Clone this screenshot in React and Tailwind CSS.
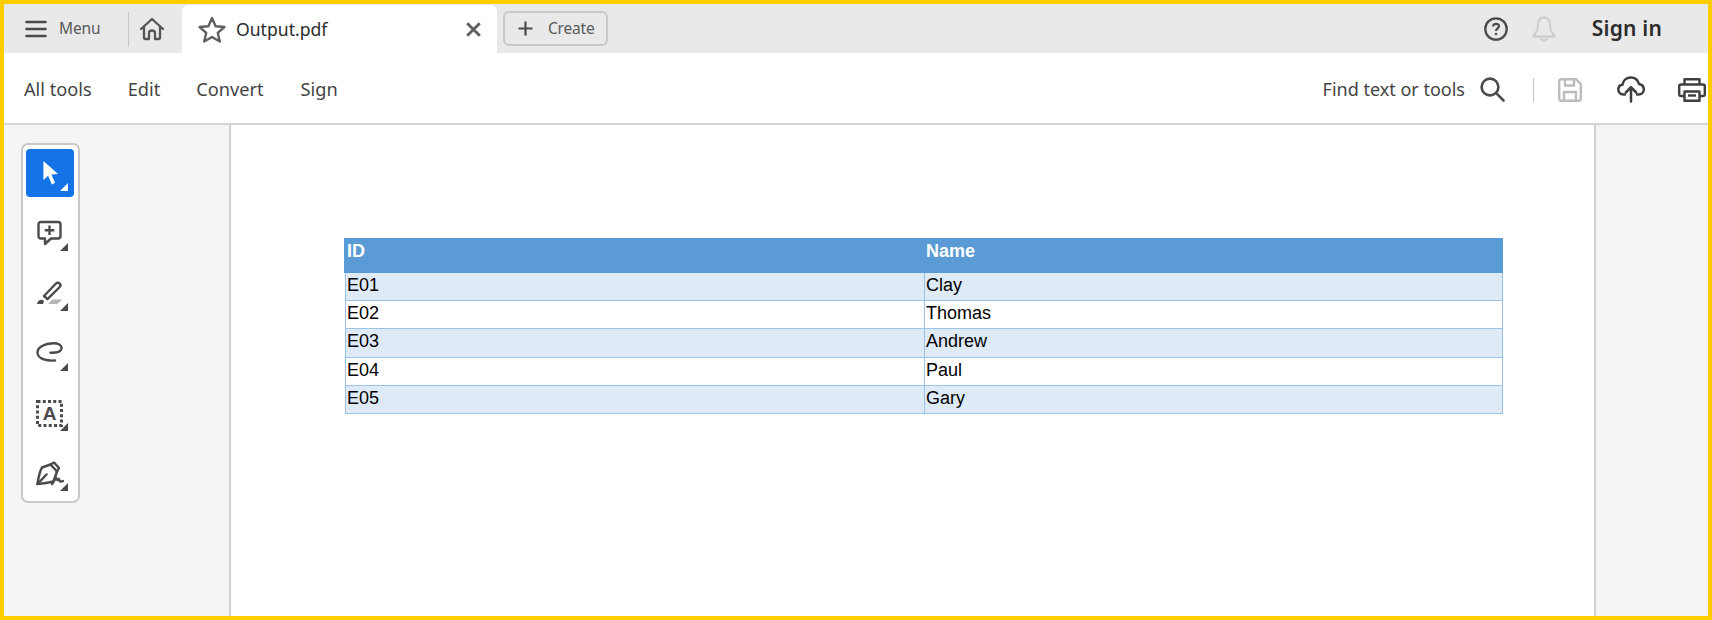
import React from "react";

const uiFont = "font-['Noto_Sans',sans-serif]";

const Corner = ({ color = "#4b4b4b" }) => (
  <svg className="absolute right-[6px] bottom-[6px]" width="8" height="8" viewBox="0 0 8 8">
    <path d="M8 0V8H0Z" fill={color} />
  </svg>
);

const ToolBtn = ({ active, children }) => (
  <div className={`relative flex h-12 w-12 items-center justify-center rounded-[4px] ${active ? "bg-[#1473e6]" : ""}`}>
    {children}
    <Corner color={active ? "#ffffff" : "#4b4b4b"} />
  </div>
);

const rows = [
  { id: "E01", name: "Clay", h: "h-[27px]" },
  { id: "E02", name: "Thomas", h: "h-[28px]" },
  { id: "E03", name: "Andrew", h: "h-[29px]" },
  { id: "E04", name: "Paul", h: "h-[28px]" },
  { id: "E05", name: "Gary", h: "h-[28px]" },
];

export default function App() {
  return (
    <div className={`flex h-[620px] w-[1712px] flex-col overflow-hidden border-4 border-[#ffcc00] bg-white ${uiFont}`}>
      {/* tab bar */}
      <div className="flex h-[49px] shrink-0 items-end bg-[#e9e9e9]">
        <div className="flex h-[49px] w-[178px] items-center">
          <svg className="ml-[21px]" width="22" height="18" viewBox="0 0 22 18" fill="none" stroke="#4b4b4b" strokeWidth="2.6" strokeLinecap="round">
            <path d="M1.5 2H20.5M1.5 9H20.5M1.5 16H20.5" />
          </svg>
          <span className="ml-[12px] text-[15.5px] tracking-[-0.1px] text-[#5a5a5a]">Menu</span>
          <div className="ml-[27px] mt-[8px] h-[35px] w-px self-start bg-[#c6c6c6]" />
          <svg className="ml-[10px]" width="26" height="24" viewBox="0 0 26 24" fill="none" stroke="#555555" strokeWidth="2.3" strokeLinejoin="round" strokeLinecap="round">
            <path d="M2 12L13 2L24 12M5 10V20.5C5 21.5 5.5 22 6.5 22H10V16C10 14.5 11 13.5 13 13.5C15 13.5 16 14.5 16 16V22H19.5C20.5 22 21 21.5 21 20.5V10" />
          </svg>
        </div>
        <div className="flex h-[48px] w-[315px] items-center rounded-t-[6px] bg-white">
          <svg className="ml-[16px]" width="28" height="27" viewBox="0 0 28 27" fill="none" stroke="#5f5f5f" strokeWidth="2.4" strokeLinejoin="round">
            <path d="M14 2L17.6 10.2L26.4 11L19.8 16.9L21.8 25.5L14 21L6.2 25.5L8.2 16.9L1.6 11L10.4 10.2Z" />
          </svg>
          <span className="ml-[10px] text-[17.6px] text-[#2c2c2c]">Output.pdf</span>
          <svg className="ml-auto mr-[16px]" width="15" height="15" viewBox="0 0 15 15" fill="none" stroke="#5f5f5f" strokeWidth="2.8">
            <path d="M1.2 1.2L13.8 13.8M13.8 1.2L1.2 13.8" />
          </svg>
        </div>
        <div className="mb-[7px] ml-[6px] flex h-[35px] w-[105px] items-center rounded-[6px] border-2 border-[#c8c8c8] bg-[#e9e9e9]">
          <svg className="ml-[13px]" width="15" height="15" viewBox="0 0 15 15" fill="none" stroke="#4b4b4b" strokeWidth="2.2">
            <path d="M7.5 0.5V14.5M0.5 7.5H14.5" />
          </svg>
          <span className="ml-[15px] text-[15.5px] tracking-[-0.2px] text-[#5a5a5a]">Create</span>
        </div>
        <div className="ml-auto flex h-[49px] items-center">
          <svg className="mr-[1px]" width="24" height="24" viewBox="0 0 24 24" fill="none" stroke="#4b4b4b" strokeWidth="2.3">
            <circle cx="12" cy="12" r="10.7" />
            <path d="M9 9.5C9 7.8 10.3 6.8 12 6.8C13.7 6.8 15 7.8 15 9.3C15 11.5 12 11.5 12 14" strokeWidth="2.2" />
            <circle cx="12" cy="17" r="1.3" fill="#4b4b4b" stroke="none" />
          </svg>
          <svg className="ml-[23px]" width="24" height="26" viewBox="0 0 24 26" fill="none" stroke="#cfcfcf" strokeWidth="2.3" strokeLinejoin="round">
            <path d="M12 1.5C7.5 1.5 6 5 6 9C6 14 5 16 1.5 19.5V20.5H22.5V19.5C19 16 18 14 18 9C18 5 16.5 1.5 12 1.5Z" />
            <path d="M9 21C9 23.5 10.5 24.5 12 24.5C13.5 24.5 15 23.5 15 21" />
          </svg>
          <span className="ml-[36px] mr-[46px] text-[21px] font-semibold tracking-[0.2px] text-[#2c2c2c]">Sign in</span>
        </div>
      </div>

      {/* tools row */}
      <div className="flex h-[72px] shrink-0 items-center border-b-2 border-[#d5d5d5] bg-white pl-[20px] pt-[3px] text-[18.2px] text-[#444444]">
        <span>All tools</span>
        <span className="ml-[36px]">Edit</span>
        <span className="ml-[36px]">Convert</span>
        <span className="ml-[37px]">Sign</span>
        <div className="ml-auto flex items-center">
          <span className="text-[18px]">Find text or tools</span>
          <svg className="ml-[15px]" width="25" height="25" viewBox="0 0 25 25" fill="none" stroke="#4b4b4b" strokeWidth="2.6" strokeLinecap="round">
            <circle cx="10" cy="10" r="8.4" />
            <path d="M16.2 16.2L23.5 23.5" />
          </svg>
          <div className="ml-[28px] h-[24px] w-px bg-[#c6c6c6]" />
          <svg className="ml-[24px]" width="24" height="24" viewBox="0 0 24 24" fill="none" stroke="#bcbcbc" strokeWidth="2.4" strokeLinejoin="round">
            <path d="M3.5 1.2H18L22.8 6V20.5C22.8 22 22 22.8 20.5 22.8H3.5C2 22.8 1.2 22 1.2 20.5V3.5C1.2 2 2 1.2 3.5 1.2Z" />
            <path d="M7 1.5V7.5H16V1.5M6 22.5V14H18V22.5" />
          </svg>
          <svg className="ml-[35px]" width="28" height="27" viewBox="0 0 28 27" fill="none" stroke="#3f3f3f" strokeWidth="2.5" strokeLinecap="round" strokeLinejoin="round">
            <path d="M8 18.5H6.5C3.5 18.5 1.3 16.5 1.3 13.5C1.3 11 3 9 5.5 8.7C6.2 4.5 9.5 1.5 13.8 1.5C17.8 1.5 21 4.2 22 8C25 8.5 26.8 10.8 26.8 13.5C26.8 16.5 24.5 18.5 21.5 18.5H20" />
            <path d="M14 25.5V11.5M8.8 16.5L14 11.2L19.2 16.5" />
          </svg>
          <svg className="ml-[33px] mr-[2px]" width="28" height="24" viewBox="0 0 28 24" fill="none" stroke="#3f3f3f" strokeWidth="2.4" strokeLinejoin="round">
            <path d="M6.5 6.5V1.2H21.5V6.5" />
            <path d="M6.5 18H3C2 18 1.2 17.2 1.2 16.2V8.3C1.2 7.3 2 6.5 3 6.5H25C26 6.5 26.8 7.3 26.8 8.3V16.2C26.8 17.2 26 18 25 18H21.5" />
            <path d="M6.5 13.5H21.5V22.8H6.5Z" />
            <path d="M10 17.5H18" />
          </svg>
        </div>
      </div>

      {/* workspace */}
      <div className="flex min-h-0 flex-1">
        <div className="w-[227px] shrink-0 border-r-2 border-[#cfcfcf] bg-[#f5f5f5] pl-[17px] pt-[18px]">
          <div className="flex h-[360px] w-[59px] flex-col gap-[12px] rounded-[7px] border-2 border-[#c8c8c8] bg-white px-[3px] pt-[4px]">
            <ToolBtn active>
              <svg width="20" height="26" viewBox="0 0 18 24" className="ml-[1px]">
                <path d="M2 1V18.5L6.3 14.6L9.8 22.5L12.8 21L9.4 13.4L15.5 13Z" fill="#ffffff" />
              </svg>
            </ToolBtn>
            <ToolBtn>
              <svg width="25" height="26" viewBox="0 0 25 26" fill="none" stroke="#4b4b4b" strokeWidth="2.4" strokeLinejoin="round" className="mr-[1px]">
                <path d="M4 2H21C22.5 2 23.5 3 23.5 4.5V16C23.5 17.5 22.5 18.5 21 18.5H14L8 24V18.5H4C2.5 18.5 1.5 17.5 1.5 16V4.5C1.5 3 2.5 2 4 2Z" />
                <path d="M12.5 5.5V15M7.7 10.2H17.3" strokeWidth="2.4" />
              </svg>
            </ToolBtn>
            <ToolBtn>
              <svg width="27" height="25" viewBox="0 0 27 25" fill="none" stroke="#4b4b4b" strokeWidth="2.4" strokeLinejoin="round" className="mr-[1px]">
                <path d="M8 15L20 2.5C21 1.5 22.5 1.5 23.7 2.5C24.7 3.5 24.7 5 23.7 6L11.5 18.2Z" />
                <path d="M1 23C1.5 20 3.5 18.5 6.5 18.8L8 20.5L7 23Z" fill="#4b4b4b" stroke="none" />
                <path d="M12 23L16.5 18.5H26.5L21 23Z" fill="#b5b5b5" stroke="none" />
              </svg>
            </ToolBtn>
            <ToolBtn>
              <svg width="27" height="20" viewBox="0 0 27 20" fill="none" stroke="#4b4b4b" strokeWidth="2.4" strokeLinecap="round" className="mb-[2px] mr-[1px]">
                <path d="M19 18.5C12 19 2 17.5 1.5 11C1 5 9 1.5 17 1.3C22 1.2 26 3 25.5 6.5C25 9.5 20.5 11 14.5 10.8" />
              </svg>
            </ToolBtn>
            <ToolBtn>
              <svg width="27" height="27" viewBox="0 0 27 27" className="mr-[1px]">
                <rect x="1.5" y="1.5" width="24" height="24" fill="none" stroke="#4b4b4b" strokeWidth="3" strokeDasharray="3 2.25" />
                <text x="13.5" y="20" textAnchor="middle" fontFamily="Liberation Sans, sans-serif" fontSize="19" fontWeight="700" fill="#4b4b4b">A</text>
              </svg>
            </ToolBtn>
            <ToolBtn>
              <svg width="28" height="25" viewBox="0 0 28 25" fill="none" stroke="#4b4b4b" strokeWidth="2.5" strokeLinejoin="round" strokeLinecap="round" className="mr-[1px]">
                <path d="M14.5 3.5L18 1.5L23 7L21 10.5" />
                <path d="M14.5 3.5L6 6.5C4 10 2.5 16 1.5 23C8 22.5 13.5 21.5 17.5 20.5L21 10.5Z" />
                <path d="M1.5 23L10.5 13.5" />
                <path d="M16 23L20 16.5C20.5 19 22 20 23 18C23 20.5 25 21 27 20" />
              </svg>
            </ToolBtn>
          </div>
        </div>

        <div className="min-w-0 flex-1 bg-white pl-[113px] pt-[113px]">
          <div className="w-[1159px] font-['Liberation_Sans',sans-serif] text-[18px] leading-[20px]">
            <div className="flex h-[35px] bg-[#5b9bd5] font-bold text-white">
              <div className="w-[580px] pl-[3px] pt-[3px]">ID</div>
              <div className="pl-[2px] pt-[3px]">Name</div>
            </div>
            <div className="ml-px border-b border-l border-r border-[#9cc2e5] text-black">
              {rows.map((row, i) => (
                <div
                  key={row.id}
                  className={`flex ${row.h} ${i % 2 === 0 ? "bg-[#deeaf6]" : "bg-white"} ${i > 0 ? "border-t border-[#9cc2e5]" : ""}`}
                >
                  <div className="w-[579px] border-r border-[#9cc2e5] pl-[1px] pt-[2px]">{row.id}</div>
                  <div className="pl-[1px] pt-[2px]">{row.name}</div>
                </div>
              ))}
            </div>
          </div>
        </div>

        <div className="w-[114px] shrink-0 border-l-2 border-[#cfcfcf] bg-[#f4f4f4]" />
      </div>
    </div>
  );
}
